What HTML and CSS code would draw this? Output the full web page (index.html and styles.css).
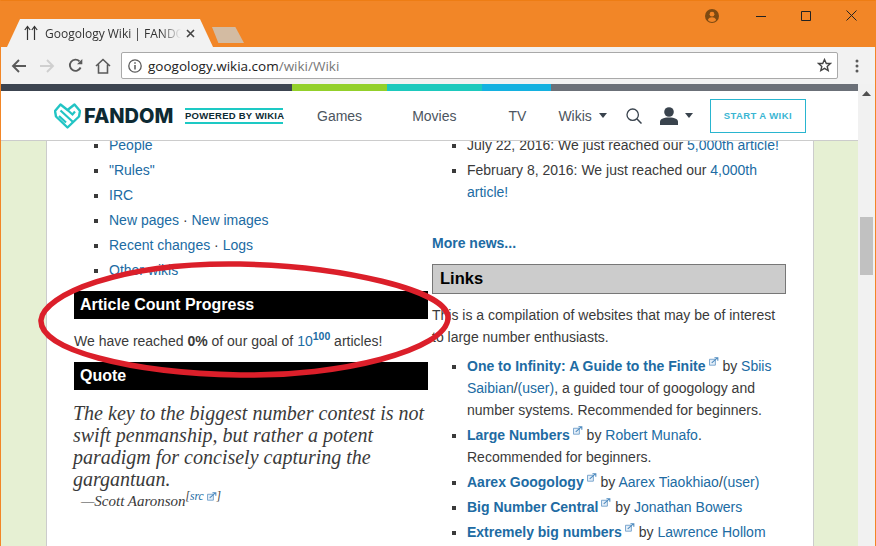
FILE: index.html
```html
<!DOCTYPE html>
<html lang="en">
<head>
<meta charset="utf-8">
<title>Googology Wiki</title>
<link rel="stylesheet" href="styles.css">
</head>
<body>
<svg class="defs" width="0" height="0" aria-hidden="true">
  <symbol id="ext" viewBox="0 0 11 11">
    <path d="M.5 2.5h6.5v6.5h-6.500z" fill="#e4eef8" stroke="#6f9fca"/>
    <path d="M3 6.500 9 1.200M6 .8h3.700v3.400" fill="none" stroke="#4f8bbf" stroke-width="1.200"/>
  </symbol>
</svg>
<div class="window">
  <div class="titlebar">
    <div class="tab">
      <svg class="favicon" width="14" height="16" viewBox="0 0 14 16"><path d="M3.500 15V2M.8 5l2.700-3.500L6.200 5M10.500 15V2M7.800 5l2.700-3.500L13.200 5" fill="none" stroke="#333" stroke-width="1.200"/></svg>
      <span class="tab-title">Googology Wiki | FANDOM powered by Wikia</span>
      <svg class="tab-close" width="9" height="9" viewBox="0 0 9 9"><path d="M1 1l7 7M8 1L1 8" stroke="#444" stroke-width="1.600"/></svg>
    </div>
    <div class="newtab"></div>
    <svg class="account" width="14" height="14" viewBox="0 0 14 14"><circle cx="7" cy="7" r="7" fill="#7d4a12"/><circle cx="7" cy="5.200" r="2.400" fill="#f28627"/><path d="M2.800 11c.8-2 2.500-2.700 4.200-2.700s3.400.7 4.200 2.700c-1 1.200-2.500 1.900-4.200 1.900S3.800 12.200 2.800 11z" fill="#f28627"/></svg>
    <div class="winctl">
      <svg width="10" height="10" viewBox="0 0 10 10"><path d="M0 5.500h10" stroke="#222"/></svg>
      <svg width="10" height="10" viewBox="0 0 10 10"><path d="M.5.500h9v9h-9z" fill="none" stroke="#222"/></svg>
      <svg width="11" height="11" viewBox="0 0 11 11"><path d="M.5.500l10 10M10.500.500l-10 10" stroke="#222"/></svg>
    </div>
  </div>
  <div class="toolbar">
    <svg class="tool" width="16" height="14" viewBox="0 0 16 14"><path d="M15 7H2M8 1 2 7l6 6" fill="none" stroke="#5a5a5a" stroke-width="1.900"/></svg>
    <svg class="tool" width="16" height="14" viewBox="0 0 16 14"><path d="M1 7h13M8 1l6 6-6 6" fill="none" stroke="#cfcfcf" stroke-width="1.900"/></svg>
    <svg class="tool" width="15" height="15" viewBox="0 0 15 15"><path d="M12.600 9.500A5.600 5.600 0 1 1 11.500 3.300" fill="none" stroke="#5a5a5a" stroke-width="1.900"/><path d="M9 6.200h5.300V.9z" fill="#5a5a5a"/></svg>
    <svg class="tool" width="16" height="16" viewBox="0 0 16 16"><path d="M1 8l7-6.500L15 8M3.500 6.500V15h9V6.500" fill="none" stroke="#5a5a5a" stroke-width="1.600"/></svg>
    <div class="omnibox">
      <svg width="14" height="14" viewBox="0 0 14 14"><circle cx="7" cy="7" r="6.200" fill="none" stroke="#5a5a5a" stroke-width="1.300"/><path d="M7 6v4.500M7 3.300v1.500" stroke="#5a5a5a" stroke-width="1.500"/></svg>
      <span class="url">googology.wikia.com<span class="url-path">/wiki/Wiki</span></span>
      <svg class="star" width="15" height="15" viewBox="0 0 15 15"><path d="M7.500 1.500l1.800 4h4.200l-3.300 2.900 1 4.200-3.700-2.300-3.700 2.300 1-4.200L1.500 5.500h4.200z" fill="none" stroke="#444" stroke-width="1.400"/></svg>
    </div>
    <svg class="dots" width="4" height="14" viewBox="0 0 4 14"><circle cx="2" cy="2" r="1.500" fill="#5a5a5a"/><circle cx="2" cy="7" r="1.500" fill="#5a5a5a"/><circle cx="2" cy="12" r="1.500" fill="#5a5a5a"/></svg>
  </div>
  <div class="viewport">
    <div class="page">
      <div class="colorbar"><i class="c1"></i><i class="c2"></i><i class="c3"></i><i class="c4"></i><i class="c5"></i></div>
      <header class="fandom">
        <svg class="logo" width="27" height="26" viewBox="0 0 27 26"><path d="M13.500 24.500 2 13.500 1 8l5.500-6.500L13.500 7l7-5.500L26 8l-1 5.500z" fill="none" stroke="#22c4c4" stroke-width="2.400" stroke-linejoin="round"/><path d="M6.500 7.500 19 19M5 13l7 6.500M13.500 7l5 4.500 2.500-3" fill="none" stroke="#22c4c4" stroke-width="2.200"/></svg>
        <span class="wordmark">FANDOM</span>
        <span class="powered">POWERED BY WIKIA</span>
        <nav class="navlinks">
          <a class="nav-games">Games</a>
          <a class="nav-movies">Movies</a>
          <a class="nav-tv">TV</a>
          <a class="nav-wikis">Wikis<i class="caret"></i></a>
        </nav>
        <svg class="search" width="16" height="16" viewBox="0 0 16 16"><circle cx="6.700" cy="6.700" r="5.700" fill="none" stroke="#39434d" stroke-width="1.300"/><path d="M10.800 10.800 15.500 15.500" stroke="#39434d" stroke-width="1.500"/></svg>
        <svg class="user" width="18" height="18" viewBox="0 0 18 18"><circle cx="9" cy="5" r="4.800" fill="#39434d"/><path d="M0 18v-3c0-3 3-4.500 9-4.500s9 1.500 9 4.500v3z" fill="#39434d"/></svg>
        <i class="caret user-caret"></i>
        <a class="startwiki">START A WIKI</a>
      </header>
      <main class="mainarea">
        <div class="article">
          <div class="columns">
            <section class="col">
              <ul class="list">
                <li><a>People</a></li>
                <li><a>"Rules"</a></li>
                <li><a>IRC</a></li>
                <li><a>New pages</a> <span class="sep">·</span> <a>New images</a></li>
                <li><a>Recent changes</a> <span class="sep">·</span> <a>Logs</a></li>
                <li><a>Other wikis</a></li>
              </ul>
              <h2 class="bar-black first-bar">Article Count Progress</h2>
              <p class="goal">We have reached <b>0%</b> of our goal of <a>10<sup>100</sup></a> articles!</p>
              <h2 class="bar-black quote-bar">Quote</h2>
              <blockquote class="quote">The key to the biggest number contest is not swift penmanship, but rather a potent paradigm for concisely capturing the gargantuan.</blockquote>
              <p class="cite">—Scott Aaronson<sup>[<a>src</a> <svg class="ext-s"><use href="#ext"/></svg>]</sup></p>
            </section>
            <section class="col">
              <ul class="list">
                <li>July 22, 2016: We just reached our <a>5,000th article!</a></li>
                <li>February 8, 2016: We just reached our <a>4,000th article!</a></li>
              </ul>
              <p class="more"><a><b>More news...</b></a></p>
              <h2 class="bar-grey">Links</h2>
              <p class="intro">This is a compilation of websites that may be of interest to large number enthusiasts.</p>
              <ul class="list links">
                <li><a><b>One to Infinity: A Guide to the Finite</b></a><svg class="ext"><use href="#ext"/></svg> by <a>Sbiis Saibian</a>/<a>(user)</a>, a guided tour of googology and number systems. Recommended for beginners.</li>
                <li><a><b>Large Numbers</b></a><svg class="ext"><use href="#ext"/></svg> by <a>Robert Munafo</a>. Recommended for beginners.</li>
                <li><a><b>Aarex Googology</b></a><svg class="ext"><use href="#ext"/></svg> by <a>Aarex Tiaokhiao</a>/<a>(user)</a></li>
                <li><a><b>Big Number Central</b></a><svg class="ext"><use href="#ext"/></svg> by <a>Jonathan Bowers</a></li>
                <li><a><b>Extremely big numbers</b></a><svg class="ext"><use href="#ext"/></svg> by <a>Lawrence Hollom</a></li>
              </ul>
            </section>
          </div>
        </div>
      </main>
    </div>
    <aside class="scrollbar">
      <svg class="scroll-up" width="9" height="5" viewBox="0 0 9 5"><path d="M4.500 0 9 5H0z" fill="#505050"/></svg>
      <div class="thumb"></div>
    </aside>
  </div>
  <svg class="annotation" width="876" height="546" viewBox="0 0 876 546"><path d="M41 320C43 295 120 262 240 264C340 266 449 290 448 318C447 350 340 377 240 375C130 373 39 350 41 320Z" fill="none" stroke="#db1f2a" stroke-width="5.500"/></svg>
</div>
</body>
</html>
```
FILE: styles.css
```css
* { box-sizing: border-box; }
html, body { margin: 0; height: 100%; overflow: hidden; }
body { font-family: "Liberation Sans", Arial, sans-serif; font-size: 14px; color: #3a3a3a; }
.defs { display: block; }
.window { position: relative; width: 876px; height: 546px; overflow: hidden; background: #f28627; border: 1px solid #f28627; border-top-color: #ee7d14; border-bottom: 0; display: flex; flex-direction: column; }

.titlebar { height: 46px; flex: none; display: flex; align-items: flex-end; padding-left: 6px; position: relative; }
.tab { width: 206px; height: 28px; background: #f2f2f2; clip-path: polygon(0 100%, 13px 0, 193px 0, 100% 100%); display: flex; align-items: center; padding-left: 17px; }
.favicon { flex: none; }
.tab-title { width: 136px; margin-left: 7px; white-space: nowrap; overflow: hidden; font-family: "Open Sans", sans-serif; font-size: 12px; color: #333; -webkit-mask-image: linear-gradient(90deg, #000 85%, transparent); mask-image: linear-gradient(90deg, #000 85%, transparent); }
.tab-close { margin-left: 5px; flex: none; }
.newtab { width: 32px; height: 16px; margin-left: -1px; margin-bottom: 4px; background: #d3bba2; clip-path: polygon(0 0, 73% 0, 100% 100%, 20% 100%); }
.account { position: absolute; left: 704px; top: 8px; }
.winctl { position: absolute; left: 755px; top: 9px; display: flex; gap: 35px; align-items: center; }

.toolbar { height: 37px; flex: none; background: #f2f2f2; display: flex; align-items: center; padding: 0 0 0 10px; gap: 12px; }
.tool:nth-child(3) { margin-left: 1px; }
.omnibox { width: 717px; height: 27px; margin-left: -2px; background: #fff; border: 1px solid #a9a9a9; border-radius: 2px; display: flex; align-items: center; padding: 0 5px 0 6px; }
.url { margin-left: 6px; font-family: "Open Sans", sans-serif; font-size: 13.5px; color: #222; }
.url-path { color: #777; }
.star { margin-left: auto; }
.dots { margin-left: 5px; }

.viewport { flex: 1; min-height: 0; display: flex; }
.page { flex: 1; min-width: 0; display: flex; flex-direction: column; background: #fff; }
.colorbar { height: 7px; flex: none; display: flex; }
.colorbar i { display: block; height: 100%; }
.c1 { width: 291px; background: #3c4450; }
.c2 { width: 95px; background: #93d02a; }
.c3 { width: 95px; background: #1dc9bd; }
.c4 { width: 69px; background: #14b1e0; }
.c5 { flex: 1; background: #6b7078; }

.fandom { height: 50px; flex: none; background: #fff; border-bottom: 1px solid #ccc; display: flex; align-items: center; padding-left: 53px; }
.logo { flex: none; }
.wordmark { margin-left: 3px; font-family: Inter, sans-serif; font-weight: 800; font-size: 20px; color: #0d2a33; width: 101px; }
.powered { flex: none; border-top: 2px solid #1dc9c4; border-bottom: 2px solid #1dc9c4; width: 98px; height: 16px; font-size: 9.500px; line-height: 12px; font-weight: 700; color: #0d2a33; letter-spacing: .25px; white-space: nowrap; }
.navlinks { display: flex; align-items: center; margin-left: 34px; font-size: 14px; }
.navlinks a { color: #4c5560; }
.nav-movies { margin-left: 50px; }
.nav-tv { margin-left: 52px; }
.nav-wikis { margin-left: 32px; display: flex; align-items: center; }
.caret { display: block; width: 0; height: 0; border-left: 4px solid transparent; border-right: 4px solid transparent; border-top: 5px solid #39434d; margin-left: 7px; }
.search { margin-left: 19px; flex: none; }
.user { margin-left: 18px; flex: none; }
.user-caret { margin-left: 7px; }
.startwiki { margin-left: 17px; width: 96px; height: 34px; border: 1px solid #29b5cf; font-size: 9.500px; font-weight: 700; letter-spacing: .4px; color: #3ab6d3; display: flex; align-items: center; justify-content: center; }

.mainarea { flex: 1; min-height: 0; background: #e6f0d3; padding: 0 44px 0 45px; overflow: hidden; }
.article { height: 100%; background: #fff; border-left: 1px solid #ccc; border-right: 1px solid #ccc; padding: 0 27px; overflow: hidden; }
.columns { display: grid; grid-template-columns: 354px 354px; column-gap: 4px; margin-top: -7px; }
.col { min-width: 0; }
.list { margin: 0; padding: 0 0 0 35px; list-style: square; line-height: 22px; }
.list li { margin-bottom: 3px; }
.list li::marker { color: #3a3a3a; }
a { color: #206ba3; text-decoration: none; }
.sep { color: #3a3a3a; }
p { margin: 0; line-height: 22px; }
h2 { margin: 0; font-size: 16px; font-weight: 700; }
.bar-black { height: 28px; background: #000; color: #fff; line-height: 27px; padding-left: 6px; }
.first-bar { margin-top: 10px; }
.goal { margin-top: 11px; }
.quote-bar { margin-top: 10px; line-height: 28px; }
sup { line-height: 0; font-size: 10.500px; }
.goal sup { font-weight: 700; }
.quote { margin: 12px 0 0 -1px; font-family: "Liberation Serif", serif; font-style: italic; font-size: 20px; line-height: 22px; }
.cite { font-family: "Liberation Serif", serif; font-style: italic; font-size: 15px; padding-left: 7px; line-height: 20px; margin-top: 1px; }
.cite sup { font-size: 11.500px; }
.ext-s { width: 10px; height: 10px; vertical-align: middle; }
.more { margin-top: 29px; }
.bar-grey { margin-top: 10px; height: 30px; background: #ccc; border: 1px solid #777; color: #000; line-height: 27px; padding-left: 7px; font-size: 16.500px; }
.intro { margin-top: 10px; }
.links { margin-top: 7px; }
.ext { width: 10px; height: 10px; margin-left: 3px; vertical-align: 4px; }

.scrollbar { width: 17px; flex: none; background: #f1f1f1; display: flex; flex-direction: column; align-items: center; position: relative; }
.scroll-up { margin-top: 7px; }
.thumb { width: 13px; height: 58px; margin-top: 121px; background: #c1c1c1; }
.annotation { position: absolute; left: -1px; top: -1px; pointer-events: none; }
```
